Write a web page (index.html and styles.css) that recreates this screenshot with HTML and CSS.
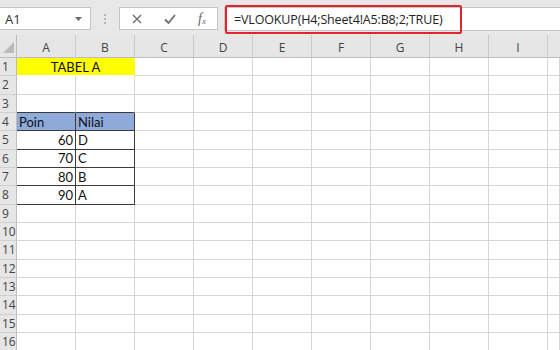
FILE: index.html
```html
<!DOCTYPE html>
<html>
<head>
<meta charset="utf-8">
<link rel="stylesheet" href="styles.css">
</head>
<body>
<div class="app">
  <div class="toolbar">
    <div class="namebox">
      <span class="name">A1</span>
      <svg class="caret" width="7" height="4" viewBox="0 0 7 4"><path d="M0 0H7L3.5 4Z" fill="#6a6a6a"/></svg>
    </div>
    <div class="grip"><i></i><i></i><i></i></div>
    <div class="fxbox">
      <svg class="ic" width="10" height="10" viewBox="0 0 10 10"><path d="M1 1L9 9M9 1L1 9" stroke="#707070" stroke-width="1.4" fill="none"/></svg>
      <svg class="ic" width="12" height="10" viewBox="0 0 12 10"><path d="M1 5.5L4.5 9L11 1" stroke="#707070" stroke-width="1.8" fill="none"/></svg>
      <span class="fx">f<sub>x</sub></span>
    </div>
    <div class="formula">
      <span class="ftext">=VLOOKUP(H4;Sheet4!A5:B8;2;TRUE)</span>
      <div class="highlight"></div>
    </div>
  </div>
  <div class="sheet">
    <div class="ch corner"><svg width="11" height="11" viewBox="0 0 11 11"><path d="M11 0V11H0Z" fill="#b9b9b9"/></svg></div>
    <div class="ch">A</div><div class="ch">B</div><div class="ch">C</div><div class="ch">D</div><div class="ch">E</div><div class="ch">F</div><div class="ch">G</div><div class="ch">H</div><div class="ch">I</div><div class="ch last"></div>

    <div class="rh">1</div><div class="c title span2">TABEL A</div><div class="c"></div><div class="c"></div><div class="c"></div><div class="c"></div><div class="c"></div><div class="c"></div><div class="c"></div><div class="c"></div>
    <div class="rh">2</div><div class="c"></div><div class="c"></div><div class="c"></div><div class="c"></div><div class="c"></div><div class="c"></div><div class="c"></div><div class="c"></div><div class="c"></div><div class="c"></div>
    <div class="rh">3</div><div class="c tb"></div><div class="c tb"></div><div class="c"></div><div class="c"></div><div class="c"></div><div class="c"></div><div class="c"></div><div class="c"></div><div class="c"></div><div class="c"></div>
    <div class="rh">4</div><div class="c tbl head">Poin</div><div class="c tbl head">Nilai</div><div class="c"></div><div class="c"></div><div class="c"></div><div class="c"></div><div class="c"></div><div class="c"></div><div class="c"></div><div class="c"></div>
    <div class="rh">5</div><div class="c tbl num">60</div><div class="c tbl">D</div><div class="c"></div><div class="c"></div><div class="c"></div><div class="c"></div><div class="c"></div><div class="c"></div><div class="c"></div><div class="c"></div>
    <div class="rh">6</div><div class="c tbl num">70</div><div class="c tbl">C</div><div class="c"></div><div class="c"></div><div class="c"></div><div class="c"></div><div class="c"></div><div class="c"></div><div class="c"></div><div class="c"></div>
    <div class="rh">7</div><div class="c tbl num">80</div><div class="c tbl">B</div><div class="c"></div><div class="c"></div><div class="c"></div><div class="c"></div><div class="c"></div><div class="c"></div><div class="c"></div><div class="c"></div>
    <div class="rh">8</div><div class="c tbl num">90</div><div class="c tbl">A</div><div class="c"></div><div class="c"></div><div class="c"></div><div class="c"></div><div class="c"></div><div class="c"></div><div class="c"></div><div class="c"></div>
    <div class="rh">9</div><div class="c"></div><div class="c"></div><div class="c"></div><div class="c"></div><div class="c"></div><div class="c"></div><div class="c"></div><div class="c"></div><div class="c"></div><div class="c"></div>
    <div class="rh">10</div><div class="c"></div><div class="c"></div><div class="c"></div><div class="c"></div><div class="c"></div><div class="c"></div><div class="c"></div><div class="c"></div><div class="c"></div><div class="c"></div>
    <div class="rh">11</div><div class="c"></div><div class="c"></div><div class="c"></div><div class="c"></div><div class="c"></div><div class="c"></div><div class="c"></div><div class="c"></div><div class="c"></div><div class="c"></div>
    <div class="rh">12</div><div class="c"></div><div class="c"></div><div class="c"></div><div class="c"></div><div class="c"></div><div class="c"></div><div class="c"></div><div class="c"></div><div class="c"></div><div class="c"></div>
    <div class="rh">13</div><div class="c"></div><div class="c"></div><div class="c"></div><div class="c"></div><div class="c"></div><div class="c"></div><div class="c"></div><div class="c"></div><div class="c"></div><div class="c"></div>
    <div class="rh">14</div><div class="c"></div><div class="c"></div><div class="c"></div><div class="c"></div><div class="c"></div><div class="c"></div><div class="c"></div><div class="c"></div><div class="c"></div><div class="c"></div>
    <div class="rh">15</div><div class="c"></div><div class="c"></div><div class="c"></div><div class="c"></div><div class="c"></div><div class="c"></div><div class="c"></div><div class="c"></div><div class="c"></div><div class="c"></div>
    <div class="rh">16</div><div class="c"></div><div class="c"></div><div class="c"></div><div class="c"></div><div class="c"></div><div class="c"></div><div class="c"></div><div class="c"></div><div class="c"></div><div class="c"></div>
  </div>
</div>
</body>
</html>
```

FILE: styles.css
```css
* { box-sizing: border-box; }
html, body { margin: 0; padding: 0; }
body {
  width: 560px;
  height: 350px;
  overflow: hidden;
  background: #ffffff;
  font-family: "Open Sans", "Liberation Sans", sans-serif;
}
.app { width: 560px; height: 350px; overflow: hidden; }

.toolbar {
  height: 35px;
  background: #e8e8e8;
  display: flex;
  align-items: flex-start;
  padding-top: 7px;
}
.namebox {
  margin-left: -1px;
  width: 92px;
  height: 23px;
  background: #fff;
  border: 1px solid #c6c6c6;
  display: flex;
  align-items: center;
  justify-content: space-between;
  padding: 0 8px 0 5px;
}
.name { font-size: 13px; color: #333; }
.caret { display: block; }
.grip {
  width: 28px;
  height: 23px;
  display: flex;
  flex-direction: column;
  align-items: center;
  justify-content: center;
  gap: 2px;
}
.grip i { display: block; width: 2px; height: 2px; background: #b5b5b5; }
.fxbox {
  width: 99px;
  height: 23px;
  background: #fff;
  border: 1px solid #c6c6c6;
  display: flex;
  align-items: center;
  padding-left: 12px;
  gap: 22px;
}
.ic { display: block; }
.fx {
  font-family: "Liberation Serif", serif;
  font-style: italic;
  font-size: 14px;
  color: #666;
  line-height: 1;
  margin-left: 0px;
}
.fx sub { font-size: 9px; vertical-align: -1px; }
.formula {
  position: relative;
  margin-left: 6px;
  flex: 1;
  height: 24px;
  background: #fff;
  border: 1px solid #c6c6c6;
  border-right: none;
  display: flex;
  align-items: center;
  padding-left: 9px;
}
.ftext { font-size: 12.5px; color: #222; letter-spacing: -0.15px; }
.highlight {
  position: absolute;
  left: 0px;
  top: -3px;
  width: 237px;
  height: 29px;
  border: 2px solid #e2242c;
  border-radius: 2px;
}

.sheet {
  display: grid;
  grid-template-columns: 17px repeat(9, 59px) 1fr;
  grid-template-rows: 23px repeat(16, 18.34px);
}
.ch {
  background: #e6e6e6;
  border-right: 1px solid #c9c9c9;
  border-bottom: 1px solid #bdbdbd;
  font-size: 12px;
  color: #444;
  display: flex;
  align-items: center;
  justify-content: center;
  padding-top: 2px;
}
.ch.corner { align-items: flex-end; justify-content: flex-end; padding: 0 2px 4px 0; border-right-color: #bdbdbd; }
.ch.corner svg { display: block; }
.ch.last { border-right: none; }
.rh {
  background: #e6e6e6;
  border-right: 1px solid #bdbdbd;
  border-bottom: 1px solid #d0d0d0;
  font-size: 12px;
  color: #444;
  display: flex;
  align-items: center;
  padding-left: 2px;
  overflow: hidden;
  white-space: nowrap;
}
.c {
  border-right: 1px solid #d6d6d6;
  border-bottom: 1px solid #d6d6d6;
  font-family: "Lato", "Open Sans", sans-serif;
  font-size: 13px;
  color: #111;
  display: flex;
  align-items: center;
  padding: 0 2px;
  white-space: nowrap;
}
.span2 { grid-column: span 2; }
.title { background: #ffff00; justify-content: center; border-right-color: #ffff00; border-bottom-color: #ffffff; }
.tb { border-bottom-color: #3c3c3c; }
.tbl { border-right-color: #3c3c3c; border-bottom-color: #3c3c3c; }
.head { background: #8eaadb; }
.num { justify-content: flex-end; }
```
